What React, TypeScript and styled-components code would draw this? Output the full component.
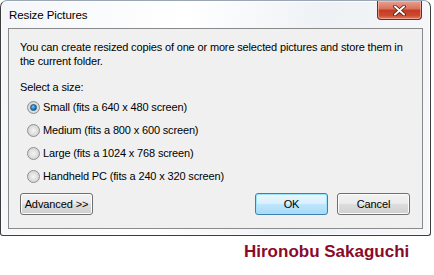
import React, { useState } from 'react';
import styled, { createGlobalStyle } from 'styled-components';

const GlobalStyle = createGlobalStyle`
	html, body {
		margin: 0;
		padding: 0;
		background: #ffffff;
	}
	body {
		font-family: 'Liberation Sans', Arial, sans-serif;
		font-size: 11px;
		letter-spacing: -0.15px;
		color: #000000;
	}
`;

const Page = styled.div`
	width: 434px;
	height: 275px;
	display: flex;
	flex-direction: column;
`;

const Window = styled.div`
	width: 431px;
	height: 236px;
	box-sizing: border-box;
	border: 1px solid #3c3c3c;
	border-top-color: #9aa6b4;
	border-radius: 7px 7px 3px 3px;
	background: linear-gradient(100deg, #f4f6f9 0%, #ffffff 40%, #eef1f5 70%, #f7f8fa 100%);
	box-shadow: inset 0 0 0 1px rgba(255, 255, 255, 0.8);
	display: flex;
	flex-direction: column;
	padding: 0 7px 6px 7px;
`;

const TitleBar = styled.div`
	height: 27px;
	display: flex;
	align-items: flex-start;
	justify-content: space-between;
`;

const Title = styled.div`
	padding: 8px 0 0 1px;
	font-size: 11.5px;
	letter-spacing: -0.1px;
	color: #000000;
`;

const CloseButton = styled.button`
	width: 45px;
	height: 19px;
	margin-right: 1px;
	padding: 0;
	border: 1px solid #6e2a23;
	border-top: none;
	border-radius: 0 0 4px 4px;
	background: linear-gradient(#eaa08e 0%, #d9705a 45%, #c23a22 50%, #cc4a2e 80%, #e07e60 100%);
	box-shadow: inset 0 0 0 1px rgba(255, 210, 200, 0.5);
	display: flex;
	align-items: center;
	justify-content: center;
`;

const Client = styled.div`
	flex: 1;
	border: 1px solid #8a8a8a;
	background: #f0f0f0;
	padding: 11px 11px 13px 11px;
	display: flex;
	flex-direction: column;
`;

const Intro = styled.p`
	margin: 0;
	line-height: 14px;
	white-space: nowrap;
`;

const Label = styled.div`
	margin-top: 12px;
	line-height: 14px;
`;

const Options = styled.div`
	margin-top: 6px;
	padding-left: 7px;
	display: flex;
	flex-direction: column;
	gap: 9px;
`;

const OptionRow = styled.label`
	display: flex;
	align-items: center;
	gap: 3px;
	height: 14px;
`;

const Dot = styled.span<{ $checked: boolean }>`
	width: 11px;
	height: 11px;
	border-radius: 50%;
	border: 1px solid #8e8f8f;
	background: radial-gradient(circle at 50% 50%, #f5f5f5 0%, #d6d6d6 70%, #e8e8e8 100%);
	display: flex;
	align-items: center;
	justify-content: center;
	flex-shrink: 0;
	&::after {
		content: '';
		display: ${(p) => (p.$checked ? 'block' : 'none')};
		width: 5px;
		height: 5px;
		border-radius: 50%;
		background: radial-gradient(circle at 40% 35%, #7fd3ff 0%, #1e82c8 50%, #0b4b86 100%);
		border: 1px solid #1b4f7e;
	}
`;

const Footer = styled.div`
	margin-top: auto;
	display: flex;
	align-items: flex-end;
	justify-content: space-between;
`;

const Buttons = styled.div`
	display: flex;
	gap: 9px;
	margin-right: 1px;
`;

const Button = styled.button<{ $default?: boolean; $width?: number }>`
	width: ${(p) => p.$width ?? 73}px;
	height: 22px;
	padding: 0;
	font-family: 'Liberation Sans', Arial, sans-serif;
	font-size: 11px;
	letter-spacing: -0.1px;
	color: #000000;
	border-radius: 3px;
	border: 1px solid ${(p) => (p.$default ? '#3c7fb1' : '#707070')};
	background: ${(p) =>
		p.$default
			? 'linear-gradient(#eaf6fd 0%, #d9f0fc 48%, #bee6fd 52%, #a7d9f5 100%)'
			: 'linear-gradient(#f2f2f2 0%, #ebebeb 48%, #dddddd 52%, #cfcfcf 100%)'};
	box-shadow: inset 0 0 0 1px ${(p) => (p.$default ? '#9ce3fb' : '#fcfcfc')};
`;

const Signature = styled.div`
	margin: 6px 0 0 244px;
	font-family: 'Liberation Sans', Arial, sans-serif;
	font-weight: bold;
	font-size: 17px;
	letter-spacing: 0;
	line-height: 20px;
	color: #8b0a2a;
`;

const sizes = [
	'Small (fits a 640 x 480 screen)',
	'Medium (fits a 800 x 600 screen)',
	'Large (fits a 1024 x 768 screen)',
	'Handheld PC (fits a 240 x 320 screen)',
];

export default function App() {
	const [selected, setSelected] = useState(0);
	return (
		<Page>
			<GlobalStyle />
			<Window>
				<TitleBar>
					<Title>Resize Pictures</Title>
					<CloseButton aria-label="Close">
						<svg width="13" height="11" viewBox="0 0 13 11">
							<path d="M2 1.5 L11 9.5 M11 1.5 L2 9.5" stroke="#4a1810" strokeWidth="3.6" strokeLinecap="round" />
							<path d="M2 1.5 L11 9.5 M11 1.5 L2 9.5" stroke="#ffffff" strokeWidth="2" strokeLinecap="round" />
						</svg>
					</CloseButton>
				</TitleBar>
				<Client>
					<Intro>
						You can create resized copies of one or more selected pictures and store them in
						<br />
						the current folder.
					</Intro>
					<Label>Select a size:</Label>
					<Options>
						{sizes.map((s, i) => (
							<OptionRow key={s} onClick={() => setSelected(i)}>
								<Dot $checked={selected === i} />
								{s}
							</OptionRow>
						))}
					</Options>
					<Footer>
						<Button $width={73}>Advanced &gt;&gt;</Button>
						<Buttons>
							<Button $default>OK</Button>
							<Button>Cancel</Button>
						</Buttons>
					</Footer>
				</Client>
			</Window>
			<Signature>Hironobu Sakaguchi</Signature>
		</Page>
	);
}
